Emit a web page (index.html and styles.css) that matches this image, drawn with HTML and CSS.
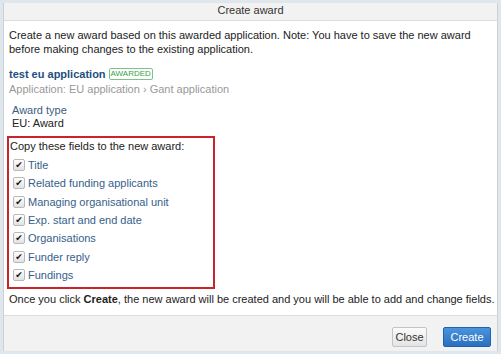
FILE: index.html
```html
<!DOCTYPE html>
<html lang="en">
<head>
    <meta charset="UTF-8">
    <title>Create award</title>
    <link rel="stylesheet" href="styles.css">
</head>
<body>
    <div class="dialog">
        <div class="dialog-header">Create award</div>
        <div class="dialog-body">
            <p class="intro">Create a new award based on this awarded application. Note: You have to save the new award before making changes to the existing application.</p>
            <div class="app">
                <div class="app-title"><span class="app-name">test eu application</span><span class="badge">AWARDED</span></div>
                <div class="app-path">Application: EU application › Gant application</div>
            </div>
            <div class="field">
                <div class="field-label">Award type</div>
                <div class="field-value">EU: Award</div>
            </div>
            <div class="copy-box">
                <div class="copy-title">Copy these fields to the new award:</div>
                <ul class="copy-list">
                    <li><span class="check">&#10004;</span>Title</li>
                    <li><span class="check">&#10004;</span>Related funding applicants</li>
                    <li><span class="check">&#10004;</span>Managing organisational unit</li>
                    <li><span class="check">&#10004;</span>Exp. start and end date</li>
                    <li><span class="check">&#10004;</span>Organisations</li>
                    <li><span class="check">&#10004;</span>Funder reply</li>
                    <li><span class="check">&#10004;</span>Fundings</li>
                </ul>
            </div>
            <p class="outro">Once you click <strong>Create</strong>, the new award will be created and you will be able to add and change fields.</p>
        </div>
        <div class="dialog-footer">
            <button class="btn">Close</button>
            <button class="btn primary">Create</button>
        </div>
    </div>
</body>
</html>
```

FILE: styles.css
```css
body {
    margin: 0;
    font-family: 'Liberation Sans', Arial, sans-serif;
    font-size: 11px;
    color: #222;
    background: #fff;
}
.dialog {
    width: 501px;
    height: 354px;
    box-sizing: border-box;
    border: 3px solid #dfe6ec;
    display: flex;
    flex-direction: column;
}
.dialog-header {
    height: 17px;
    line-height: 15px;
    background: #f2f2f2;
    border-bottom: 1px solid #dcdcdc;
    border-left: 1px solid #c9d0d6;
    border-right: 1px solid #c9d0d6;
    text-align: center;
    color: #333;
}
.dialog-body {
    flex: 1;
    padding: 7px 5px 0 5px;
    border-left: 1px solid #c9d0d6;
    border-right: 1px solid #c9d0d6;
}
.intro {
    margin: 0;
    line-height: 14px;
}
.app {
    margin-top: 11px;
}
.app-title {
    display: flex;
    align-items: center;
    gap: 3px;
    height: 14px;
}
.app-name {
    font-weight: bold;
    color: #1d4f7e;
}
.badge {
    font-size: 8px;
    color: #3aa14a;
    border: 1px solid #7cc486;
    border-radius: 2px;
    padding: 0 1px;
    line-height: 10px;
}
.app-path {
    color: #999;
    margin-top: 1px;
    line-height: 14px;
}
.field {
    margin-top: 8px;
    padding-left: 3px;
}
.field-label {
    color: #3a5d80;
    line-height: 13px;
}
.field-value {
    line-height: 13px;
}
.copy-box {
    margin: 6px 0 0 -2px;
    width: 208px;
    box-sizing: border-box;
    border: 2px solid #c9242b;
    padding: 1px 0 3px 1px;
}
.copy-title {
    line-height: 14px;
}
.copy-list {
    list-style: none;
    margin: 3px 0 0 0;
    padding: 0;
}
.copy-list li {
    display: flex;
    align-items: center;
    height: 18.33px;
    color: #36608a;
}
.check {
    width: 12px;
    height: 12px;
    box-sizing: border-box;
    margin: 0 3px 0 3px;
    border: 1px solid #b9b9b9;
    border-radius: 2px;
    background: linear-gradient(#fff, #e2e2e2);
    color: #111;
    font-family: 'DejaVu Sans', sans-serif;
    font-size: 9px;
    line-height: 10px;
    text-align: center;
}
.outro {
    margin: 3px 0 0 0;
    line-height: 14px;
    white-space: nowrap;
}
.dialog-footer {
    height: 36px;
    box-sizing: border-box;
    background: #f2f2f2;
    border-top: 1px solid #dcdcdc;
    border-left: 1px solid #c9d0d6;
    border-right: 1px solid #c9d0d6;
    display: flex;
    justify-content: flex-end;
    align-items: flex-start;
    gap: 16px;
    padding: 11px 6px 0 0;
}
.btn {
    font-family: inherit;
    font-size: 11px;
    width: 35px;
    height: 20px;
    padding: 0;
    border: 1px solid #c4c4c4;
    border-radius: 2px;
    background: linear-gradient(#fbfbfb, #e4e4e4);
    color: #333;
}
.btn.primary {
    width: 48px;
    border-color: #1f63b0;
    background: linear-gradient(#4b94dc, #2a6fbf);
    color: #fff;
}
```
